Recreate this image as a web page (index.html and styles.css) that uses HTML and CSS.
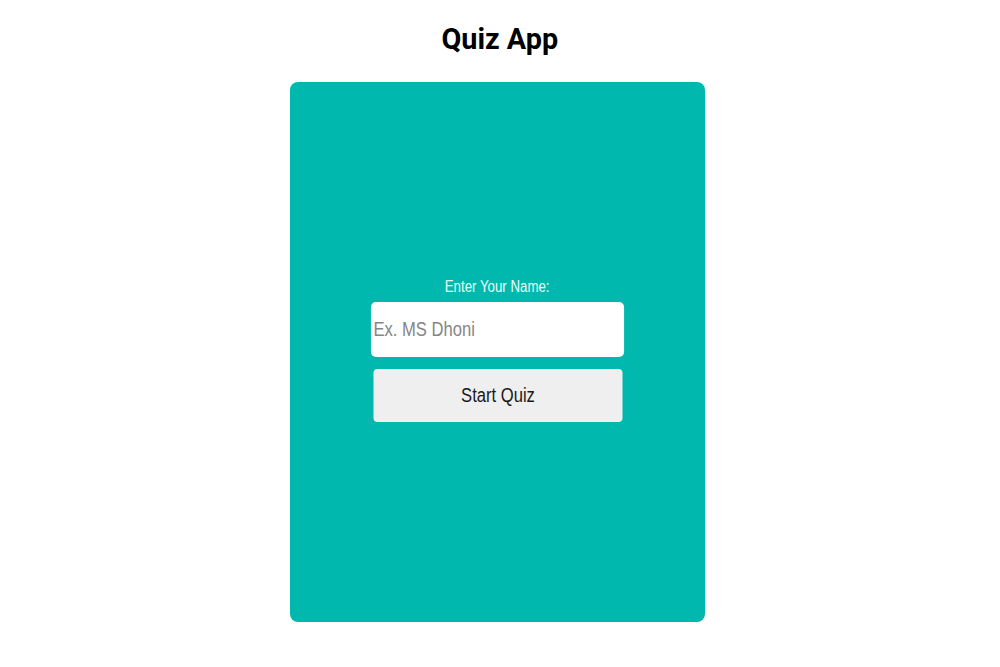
FILE: index.html
```html
<!DOCTYPE html>
<html>
<head>
<meta charset="utf-8">
<title>Quiz App</title>
<link rel="stylesheet" href="styles.css">
</head>
<body>
<h1 class="title">Quiz App</h1>
<div class="card">
  <div class="form">
    <label class="label" for="name"><span class="narrow">Enter Your Name:</span></label>
    <input class="name-input" id="name" type="text" placeholder="Ex. MS Dhoni">
    <button class="start-btn">Start Quiz</button>
  </div>
</div>
</body>
</html>
```

FILE: styles.css
```css
html, body {
  margin: 0;
  padding: 0;
  background: #ffffff;
}
body {
  font-family: "Liberation Sans", Arial, sans-serif;
  display: flex;
  flex-direction: column;
  align-items: center;
}
.title {
  margin: 21px 0 0 0;
  font-family: Roboto, "Liberation Sans", sans-serif;
  font-size: 30px;
  line-height: 35px;
  font-weight: bold;
  color: #000;
  transform: scaleX(0.96);
}
.card {
  margin: 26px 5px 0 0;
  width: 415px;
  height: 540px;
  background: #00b8ae;
  border-radius: 8px;
  display: flex;
  align-items: center;
  justify-content: center;
}
.form {
  display: flex;
  flex-direction: column;
  align-items: center;
  margin-top: -4px;
}
.label {
  color: #ecfff8;
  font-size: 16px;
  line-height: 18px;
  margin-bottom: 6px;
}
.narrow {
  display: inline-block;
  transform: scaleX(0.83);
}
.name-input {
  box-sizing: border-box;
  width: 305px;
  height: 55px;
  margin: 0 -26px;
  border: none;
  border-radius: 6px / 5px;
  background: #fff;
  padding: 0 3px;
  font-family: inherit;
  font-size: 20px;
  color: #333;
  outline: none;
  transform: scaleX(0.83);
}
.name-input::placeholder {
  color: #858585;
}
.start-btn {
  box-sizing: border-box;
  margin: 12px -26px 0;
  width: 300px;
  height: 53px;
  border: none;
  border-radius: 5px / 4px;
  background: #efefef;
  font-family: inherit;
  font-size: 20px;
  color: #1a1a1a;
  transform: scaleX(0.83);
}
```
